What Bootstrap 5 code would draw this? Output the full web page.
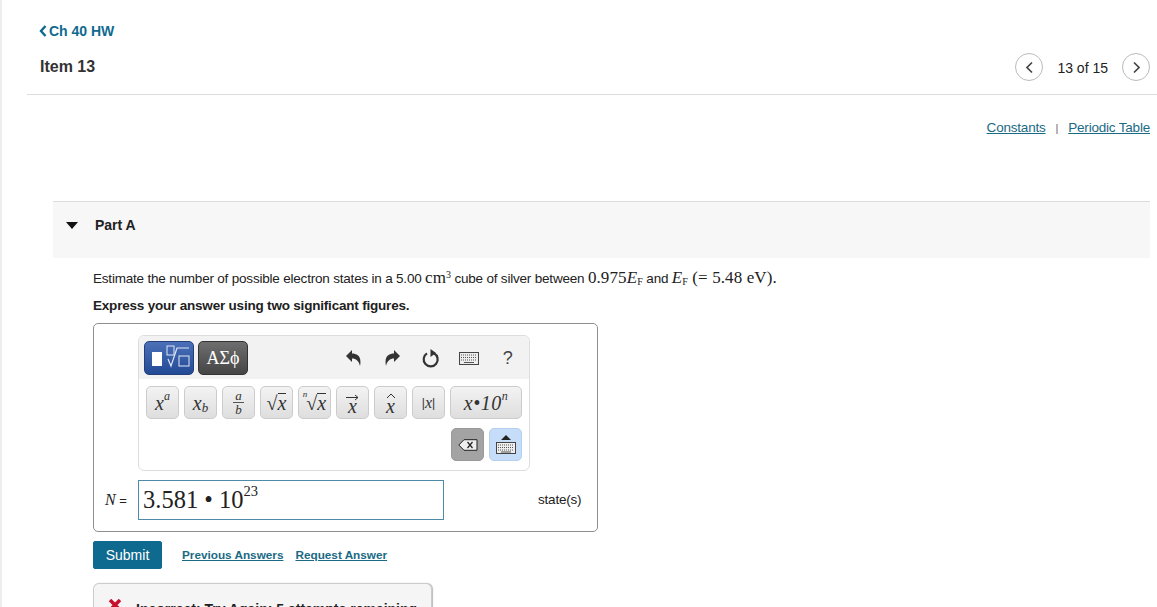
<!DOCTYPE html>
<html lang="en">
<head>
<meta charset="utf-8">
<title>Item 13</title>
<link href="https://cdn.jsdelivr.net/npm/bootstrap@5.3.0/dist/css/bootstrap.min.css" rel="stylesheet">
<style>
html,body{height:607px;overflow:hidden}
body{font-family:"Liberation Sans",Arial,sans-serif;font-size:14px;color:#212121;background:#fff;border-left:2px solid #eee}
a{color:#0f6a8f}
.serif{font-family:"Liberation Serif","Times New Roman",serif;letter-spacing:.1px}
.backwrap{padding:22px 0 0 37px;height:47px;line-height:18px}
.back{font-weight:700;font-size:14px;color:#0f6a8f;text-decoration:none}
.back svg{margin-right:2px;vertical-align:-1px}
.headrow{margin-left:25px;height:48px;border-bottom:1.5px solid #ddd;padding:0 7px 0 13px}
.itemtitle{font-size:16px;font-weight:700;color:#333;line-height:20px;margin-bottom:8px}
.pager{margin-bottom:7px;font-size:14px;color:#222}
.pagetxt{margin:3px 14px 0 14px}
.circ{width:28px;height:28px;border:1px solid #bbb;border-radius:50%;background:#fff;padding:0;display:flex;align-items:center;justify-content:center}
.toplinks{padding:24px 7px 0 0;height:106px;line-height:18px;font-size:13.5px;letter-spacing:-.2px}
.toplinks a{color:#1a6a85}
.toplinks span{color:#666;margin:0 10px;font-size:11px}
.partband{margin-left:51px;margin-right:7px;height:57px;background:#f7f7f7;border-top:1px solid #ddd;padding:14px 0 0 42px;font-weight:700;line-height:18px;position:relative}
.tri{width:0;height:0;border-left:6px solid transparent;border-right:6px solid transparent;border-top:7px solid #111;margin:6px 0 0 -29px;position:absolute}
.qbody{margin-left:91px;width:760px}
.prompt{margin:10px 0 0;line-height:20px;white-space:nowrap;font-size:13.5px;letter-spacing:-.2px}
.prompt .serif{font-size:17px;letter-spacing:.1px}
.prompt .mth{font-family:"Liberation Serif",serif;font-size:17px;letter-spacing:0}
.prompt sup{font-size:10px;line-height:0}
.prompt sub{font-size:10px;line-height:0;bottom:-.15em}
.express{margin:7px 0 0;font-weight:700;line-height:20px;font-size:13.5px;letter-spacing:-.2px}
.ansbox{width:505px;height:209px;margin-top:7px;border:1px solid #8f8f8f;border-radius:5px;padding:11px 0 0 44px}
.tool{width:392px;height:136px;border:1px solid #ddd;border-radius:6px;position:relative}
.tbar{height:43px;background:#f2f2f2;border-radius:6px 6px 0 0;padding:5px 0 0 5px}
.tab{height:34px;width:50px;border-radius:5px;border:1px solid #333;color:#fff;display:flex;align-items:center;justify-content:center}
.tab1{background:linear-gradient(#4b70b8,#234a96);border-color:#23407c;margin-right:4px}
.tab2{background:linear-gradient(#6e6e6e,#454545);font-size:18px;font-family:"Liberation Serif",serif}
.ticks{margin-right:2px}
.tic{width:38.5px;display:flex;justify-content:center;align-items:center;height:34px;color:#444;font-size:18px}
.keys{padding:7px 0 0 7px;gap:5px}
.k{width:33px;height:33px;border:1px solid #ccc;border-radius:5px;background:linear-gradient(#f3f3f3,#dedede);font-family:"Liberation Serif",serif;font-style:italic;color:#333;display:flex;align-items:center;justify-content:center;font-size:20px;padding:0;position:relative;line-height:1}
.k.wide{width:72px;font-size:20px;letter-spacing:.5px}
.k sup{font-size:12px;top:-.55em}
.k sub{font-size:13px;bottom:-.4em}
.k .upr{font-style:normal}
.k .bar{border-top:1px solid #333;line-height:19px}
.k .nidx{font-size:9px;margin-right:-1px;top:-.9em}
.k .ovr{position:absolute}
.k .arrow{top:7px;left:9px}
.k .hat{top:6px;left:11px}
.k .lowx{margin-top:6px}
.k.absk{font-size:16px}
.k .pipe{font-style:normal;font-family:"Liberation Sans",sans-serif;font-size:12px}
.frac{display:flex;flex-direction:column;align-items:center;font-size:13px;line-height:13px}
.frac i:first-child{border-bottom:1px solid #555;padding:0 2px}
.bk{padding:9px 7px 0 0;gap:5px}
.kdel{width:33px;height:33px;background:#a3a3a3;border:1px solid #999;border-radius:5px;display:flex;align-items:center;justify-content:center;padding:0}
.kkb{width:33px;height:33px;background:#c6ddf9;border:1px solid #b5cfee;border-radius:5px;display:flex;align-items:center;justify-content:center;padding:0;flex-direction:column;gap:2px}
.answer{margin:9px 0 0 -33px;width:481px}
.nlab{width:33px;font-size:13px;white-space:nowrap;text-align:left;flex:none}
.nlab i{font-family:"Liberation Serif",serif;font-size:16px}
.inp{width:306px;height:40px;border:1px solid #4f8ba8;font-family:"Liberation Serif",serif;font-size:24.5px;color:#222;padding:0 0 0 4px;line-height:38px;white-space:nowrap;flex:none;overflow:hidden}
.inp sup{font-size:14.5px;top:-.8em;line-height:0}
.unit{margin-left:94px;white-space:nowrap;font-size:13.5px;letter-spacing:-.2px}
.subrow{margin-top:8px;height:29px}
.btn-sub{width:69px;height:28px;padding:0;background:#0f6a8f;border:1px solid #0f6a8f;color:#fff;font-size:14px;border-radius:2px;line-height:26px}
.btn-sub:hover{background:#0f6a8f;color:#fff}
.lnk{font-size:11.75px;font-weight:700;color:#1a6a85;margin-left:12px}
.lnk.first{margin-left:20px}
.fb{margin-top:14px;width:339px;height:60px;border:1px solid #ccc;border-bottom:0;border-radius:6px 6px 0 0;background:#f5f5f5;padding:15px 0 0 14px;font-weight:700;white-space:nowrap;line-height:18px;font-size:14px;box-shadow:1px 0 1px #bbb}
.fb svg{margin-right:14px;vertical-align:3px}
</style>
</head>
<body>
<div class="backwrap"><a href="#" class="back"><svg width="8" height="12" viewBox="0 0 8 12"><path d="M6.500 1 2 6l4.500 5" fill="none" stroke="#0f6a8f" stroke-width="2.400"/></svg>Ch 40 HW</a></div>
<div class="headrow d-flex justify-content-between align-items-center">
  <div class="itemtitle">Item 13</div>
  <div class="pager d-flex align-items-center">
    <button class="circ" type="button" aria-label="Previous"><svg width="9" height="13" viewBox="0 0 9 13"><path d="M7 1.500 2 6.500l5 5" fill="none" stroke="#444" stroke-width="1.700"/></svg></button>
    <span class="pagetxt">13 of 15</span>
    <button class="circ" type="button" aria-label="Next"><svg width="9" height="13" viewBox="0 0 9 13"><path d="M2 1.500 7 6.500l-5 5" fill="none" stroke="#444" stroke-width="1.700"/></svg></button>
  </div>
</div>
<div class="toplinks text-end"><a href="#">Constants</a><span>|</span><a href="#">Periodic Table</a></div>
<div class="partband"><div class="tri"></div>Part A</div>
<div class="qbody">
  <p class="prompt">Estimate the number of possible electron states in a 5.00 <span class="mth">cm<sup>3</sup></span> cube of silver between <span class="serif">0.975<i>E</i><sub>F</sub></span> and <span class="serif"><i>E</i><sub>F</sub> (= 5.48 eV).</span></p>
  <p class="express">Express your answer using two significant figures.</p>
  <div class="ansbox">
    <div class="tool">
      <div class="tbar d-flex">
        <div class="tab tab1"><svg width="48" height="32" viewBox="1 1 48 32"><rect x="8" y="11" width="10" height="14" fill="#fff"/><rect x="23" y="5" width="7" height="9" fill="none" stroke="#dfe6f5"/><path d="M24 18l3 7 6-18h12" fill="none" stroke="#dfe6f5" stroke-width="1.200"/><rect x="35" y="15" width="10" height="10" fill="none" stroke="#dfe6f5"/></svg></div>
        <div class="tab tab2">ΑΣϕ</div>
        <div class="ticks d-flex ms-auto">
          <div class="tic"><svg width="15" height="16" viewBox="0 0 15 16"><path d="M0 6 6 0V3.500C11 3.500 16 6 14 16 13 11 10 8.500 6 8.500V12Z" fill="#333"/></svg></div>
          <div class="tic"><svg width="15" height="16" viewBox="0 0 15 16"><path d="M15 6 9 0V3.500C4 3.500-1 6 1 16 2 11 5 8.500 9 8.500V12Z" fill="#333"/></svg></div>
          <div class="tic"><svg width="18" height="19" viewBox="0 0 18 19"><path d="M12 4.200A7 7 0 1 1 5 4.400" fill="none" stroke="#333" stroke-width="2.200"/><path d="M8.500 0 14 4 8.500 8z" fill="#333"/></svg></div>
          <div class="tic"><svg width="20" height="13" viewBox="0 0 20 13"><rect x=".5" y=".5" width="19" height="12" fill="#eee" stroke="#444"/><path d="M2 3h16M2 5.500h16M2 8h16" stroke="#555" stroke-dasharray="1 1"/><path d="M5 10.500h10" stroke="#555"/></svg></div>
          <div class="tic">?</div>
        </div>
      </div>
      <div class="keys d-flex">
        <button class="k" type="button">x<sup>a</sup></button>
        <button class="k" type="button">x<sub>b</sub></button>
        <button class="k" type="button"><span class="frac"><i>a</i><i>b</i></span></button>
        <button class="k" type="button"><span class="upr">√</span><span class="bar">x</span></button>
        <button class="k" type="button"><sup class="nidx">n</sup><span class="upr">√</span><span class="bar">x</span></button>
        <button class="k" type="button"><svg class="ovr arrow" width="14" height="7" viewBox="0 0 14 7"><path d="M0 3.500h12M9 1l3 2.500L9 6" fill="none" stroke="#333"/></svg><span class="lowx">x</span></button>
        <button class="k" type="button"><svg class="ovr hat" width="10" height="6" viewBox="0 0 10 6"><path d="M1 5l4-4 4 4" fill="none" stroke="#333"/></svg><span class="lowx">x</span></button>
        <button class="k absk" type="button"><span class="pipe">|</span>x<span class="pipe">|</span></button>
        <button class="k wide" type="button">x•10<sup>n</sup></button>
      </div>
      <div class="bk d-flex justify-content-end">
        <button class="kdel" type="button" aria-label="Delete"><svg width="20" height="12" viewBox="0 0 20 12"><path d="M6 .7h13v10.600H6L.8 6z" fill="#eee" stroke="#222"/><path d="M9.500 3l5 6M14.500 3l-5 6" stroke="#222" stroke-width="1.200"/></svg></button>
        <button class="kkb" type="button" aria-label="Keyboard"><svg width="10" height="5" viewBox="0 0 10 5"><path d="M5 0l5 5H0z" fill="#222"/></svg><svg width="20" height="12" viewBox="0 0 20 12"><rect x=".5" y=".5" width="19" height="11" fill="#eee" stroke="#444"/><path d="M2 3h16M2 5.500h16M2 8h16" stroke="#555" stroke-dasharray="1 1"/><path d="M5 10h10" stroke="#555"/></svg></button>
      </div>
    </div>
    <div class="answer d-flex align-items-center">
      <div class="nlab"><i>N</i> =</div>
      <div class="inp">3.581 • 10<sup>23</sup></div>
      <div class="unit">state(s)</div>
    </div>
  </div>
  <div class="subrow d-flex align-items-center">
    <button class="btn btn-sub" type="button">Submit</button>
    <a href="#" class="lnk first">Previous Answers</a>
    <a href="#" class="lnk">Request Answer</a>
  </div>
  <div class="fb"><svg width="14" height="12" viewBox="0 0 14 12"><path d="M2 1l10 10M12 1 2 11" stroke="#c8102e" stroke-width="3.500"/></svg>Incorrect; Try Again; 5 attempts remaining</div>
</div>
<script src="https://cdn.jsdelivr.net/npm/bootstrap@5.3.0/dist/js/bootstrap.bundle.min.js"></script>
</body>
</html>
